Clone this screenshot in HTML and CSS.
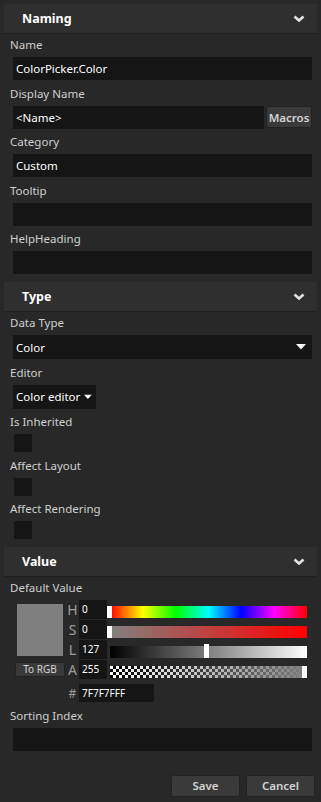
FILE: index.html
```html
<!DOCTYPE html>
<html lang="en">
<head>
    <meta charset="UTF-8">
    <meta name="viewport" content="width=device-width, initial-scale=1.0">
    <title>Property Editor</title>
    <link rel="stylesheet" href="styles.css">
</head>
<body>
    <div class="panel">
        <section class="group">
            <div class="group-header">
                <span>Naming</span>
                <svg class="chevron" width="12" height="8" viewBox="0 0 12 8"><path d="M1.5 1.5 L6 5.5 L10.5 1.5" fill="none" stroke="#e2e2e2" stroke-width="2.6"/></svg>
            </div>
            <div class="group-body">
                <div class="field">
                    <div class="field-label">Name</div>
                    <div class="text-box">ColorPicker.Color</div>
                </div>
                <div class="field">
                    <div class="field-label">Display Name</div>
                    <div class="input-row">
                        <div class="text-box grow">&lt;Name&gt;</div>
                        <button class="btn btn-macros">Macros</button>
                    </div>
                </div>
                <div class="field">
                    <div class="field-label">Category</div>
                    <div class="text-box">Custom</div>
                </div>
                <div class="field">
                    <div class="field-label">Tooltip</div>
                    <div class="text-box"></div>
                </div>
                <div class="field">
                    <div class="field-label">HelpHeading</div>
                    <div class="text-box"></div>
                </div>
            </div>
        </section>

        <section class="group">
            <div class="group-header">
                <span>Type</span>
                <svg class="chevron" width="12" height="8" viewBox="0 0 12 8"><path d="M1.5 1.5 L6 5.5 L10.5 1.5" fill="none" stroke="#e2e2e2" stroke-width="2.6"/></svg>
            </div>
            <div class="group-body">
                <div class="field">
                    <div class="field-label">Data Type</div>
                    <div class="dropdown">
                        <span>Color</span>
                        <svg width="10" height="6" viewBox="0 0 10 6"><polygon points="0,0 10,0 5,5.5" fill="#fff"/></svg>
                    </div>
                </div>
                <div class="field">
                    <div class="field-label">Editor</div>
                    <div class="dropdown dropdown-small">
                        <span>Color editor</span>
                        <svg width="9" height="6" viewBox="0 0 10 6"><polygon points="0,0 10,0 5,5.5" fill="#fff"/></svg>
                    </div>
                </div>
                <div class="field">
                    <div class="field-label">Is Inherited</div>
                    <div class="checkbox"></div>
                </div>
                <div class="field">
                    <div class="field-label">Affect Layout</div>
                    <div class="checkbox"></div>
                </div>
                <div class="field">
                    <div class="field-label">Affect Rendering</div>
                    <div class="checkbox"></div>
                </div>
            </div>
        </section>

        <section class="group">
            <div class="group-header">
                <span>Value</span>
                <svg class="chevron" width="12" height="8" viewBox="0 0 12 8"><path d="M1.5 1.5 L6 5.5 L10.5 1.5" fill="none" stroke="#e2e2e2" stroke-width="2.6"/></svg>
            </div>
            <div class="group-body">
                <div class="field">
                    <div class="field-label">Default Value</div>
                    <div class="color-picker">
                        <div class="picker-left">
                            <div class="swatch"></div>
                            <button class="btn btn-small">To RGB</button>
                        </div>

                        <div class="channel">H</div>
                        <div class="num-box">0</div>
                        <div class="slider">
                            <div class="track track-hue"></div>
                            <div class="thumb" style="left: 0px"></div>
                        </div>

                        <div class="channel">S</div>
                        <div class="num-box">0</div>
                        <div class="slider">
                            <div class="track track-sat"></div>
                            <div class="thumb" style="left: 0px"></div>
                        </div>

                        <div class="channel">L</div>
                        <div class="num-box">127</div>
                        <div class="slider">
                            <div class="track track-light"></div>
                            <div class="thumb thumb-tall" style="left: 97px"></div>
                        </div>

                        <div class="channel">A</div>
                        <div class="num-box">255</div>
                        <div class="slider">
                            <div class="track track-alpha"></div>
                            <div class="thumb" style="left: 195px"></div>
                        </div>

                        <div class="channel hex-mark">#</div>
                        <div class="num-box hex-box">7F7F7FFF</div>
                    </div>
                </div>
                <div class="field">
                    <div class="field-label">Sorting Index</div>
                    <div class="text-box"></div>
                </div>
            </div>
        </section>

        <div class="actions">
            <button class="btn btn-action">Save</button>
            <button class="btn btn-action">Cancel</button>
        </div>
    </div>
</body>
</html>
```

FILE: styles.css
```css
body {
    margin: 0;
    padding: 0;
    background-color: #282828;
    font-family: "Noto Sans", "Open Sans", sans-serif;
    font-size: 11.5px;
    color: #cfcfcf;
}
.panel {
    width: 313px;
    padding: 4px 4px 0 4px;
}
.group-header {
    height: 30px;
    box-sizing: border-box;
    background-color: #2f2f2f;
    border-bottom: 1px solid #1f1f1f;
    padding: 0 12px 0 18px;
    display: flex;
    align-items: center;
    justify-content: space-between;
    color: #fff;
    font-size: 12.5px;
    font-weight: bold;
}
.chevron {
    display: block;
}
.group-body {
    padding: 0 5px 8px 9px;
    display: flex;
    flex-direction: column;
    gap: 2.5px;
}
.field-label {
    height: 23px;
    box-sizing: border-box;
    padding-top: 3px;
    margin-left: -3px;
    line-height: 16px;
}
.text-box {
    height: 23px;
    line-height: 23px;
    background-color: #151515;
    color: #fff;
    padding-left: 3px;
    white-space: nowrap;
}
.input-row {
    display: flex;
    gap: 2px;
    align-items: center;
}
.grow {
    flex: 1;
}
.btn {
    font-family: inherit;
    background-color: #3a3a3a;
    border: 1px solid #222;
    border-radius: 2px;
    color: #d4d4d4;
    padding: 0;
    cursor: pointer;
}
.btn-macros {
    width: 46px;
    height: 22px;
    font-size: 11.5px;
    font-weight: 600;
}
.dropdown {
    height: 24px;
    background-color: #151515;
    color: #fff;
    padding: 0 6px 0 3px;
    display: flex;
    align-items: center;
    justify-content: space-between;
    white-space: nowrap;
}
.dropdown-small {
    width: 76px;
    padding-right: 4px;
    gap: 4px;
}
.checkbox {
    width: 18px;
    height: 18px;
    margin-left: 1px;
    background-color: #151515;
}
.color-picker {
    display: grid;
    grid-template-columns: 53px 13px 28px 200px;
    grid-template-rows: repeat(4, 20px) 22px;
}
.picker-left {
    grid-row: 1 / span 4;
    display: flex;
    flex-direction: column;
}
.swatch {
    width: 46px;
    height: 52px;
    margin: 4px 0 0 4px;
    background-color: #7f7f7f;
}
.btn-small {
    width: 50px;
    height: 15px;
    margin: 6px 0 0 2px;
    font-size: 10px;
    line-height: 13px;
}
.channel {
    height: 19px;
    line-height: 19px;
    text-align: center;
    font-size: 14px;
    color: #9c9c9c;
}
.num-box {
    height: 19px;
    line-height: 19px;
    background-color: #151515;
    color: #fff;
    font-size: 10px;
    padding-left: 3px;
}
.slider {
    position: relative;
}
.track {
    margin: 6px 0 0 3px;
    height: 12px;
}
.track-hue {
    background: linear-gradient(to right, #f00, #ff0, #0f0, #0ff, #00f, #f0f, #f00);
}
.track-sat {
    background: linear-gradient(to right, #808080, #f00);
}
.track-light {
    background: linear-gradient(to right, #000, #fff);
}
.track-alpha {
    margin-right: 3px;
    background:
        linear-gradient(to right, rgba(128, 128, 128, 0), #808080),
        repeating-conic-gradient(#000 0 25%, #fff 0 50%) 0 0 / 6px 6px;
}
.thumb {
    position: absolute;
    top: 6px;
    width: 5px;
    height: 12px;
    background-color: #fff;
}
.thumb-tall {
    top: 4px;
    height: 14px;
}
.hex-mark {
    grid-column: 2;
    margin-top: 4px;
    font-size: 12px;
}
.hex-box {
    grid-column: 3 / span 2;
    width: 72px;
    height: 18px;
    line-height: 18px;
    margin-top: 4px;
}
.actions {
    display: flex;
    justify-content: flex-end;
    gap: 6px;
    padding: 16px 2px 0 0;
}
.btn-action {
    width: 69px;
    height: 22px;
    font-size: 11.5px;
    font-weight: 600;
}
```
